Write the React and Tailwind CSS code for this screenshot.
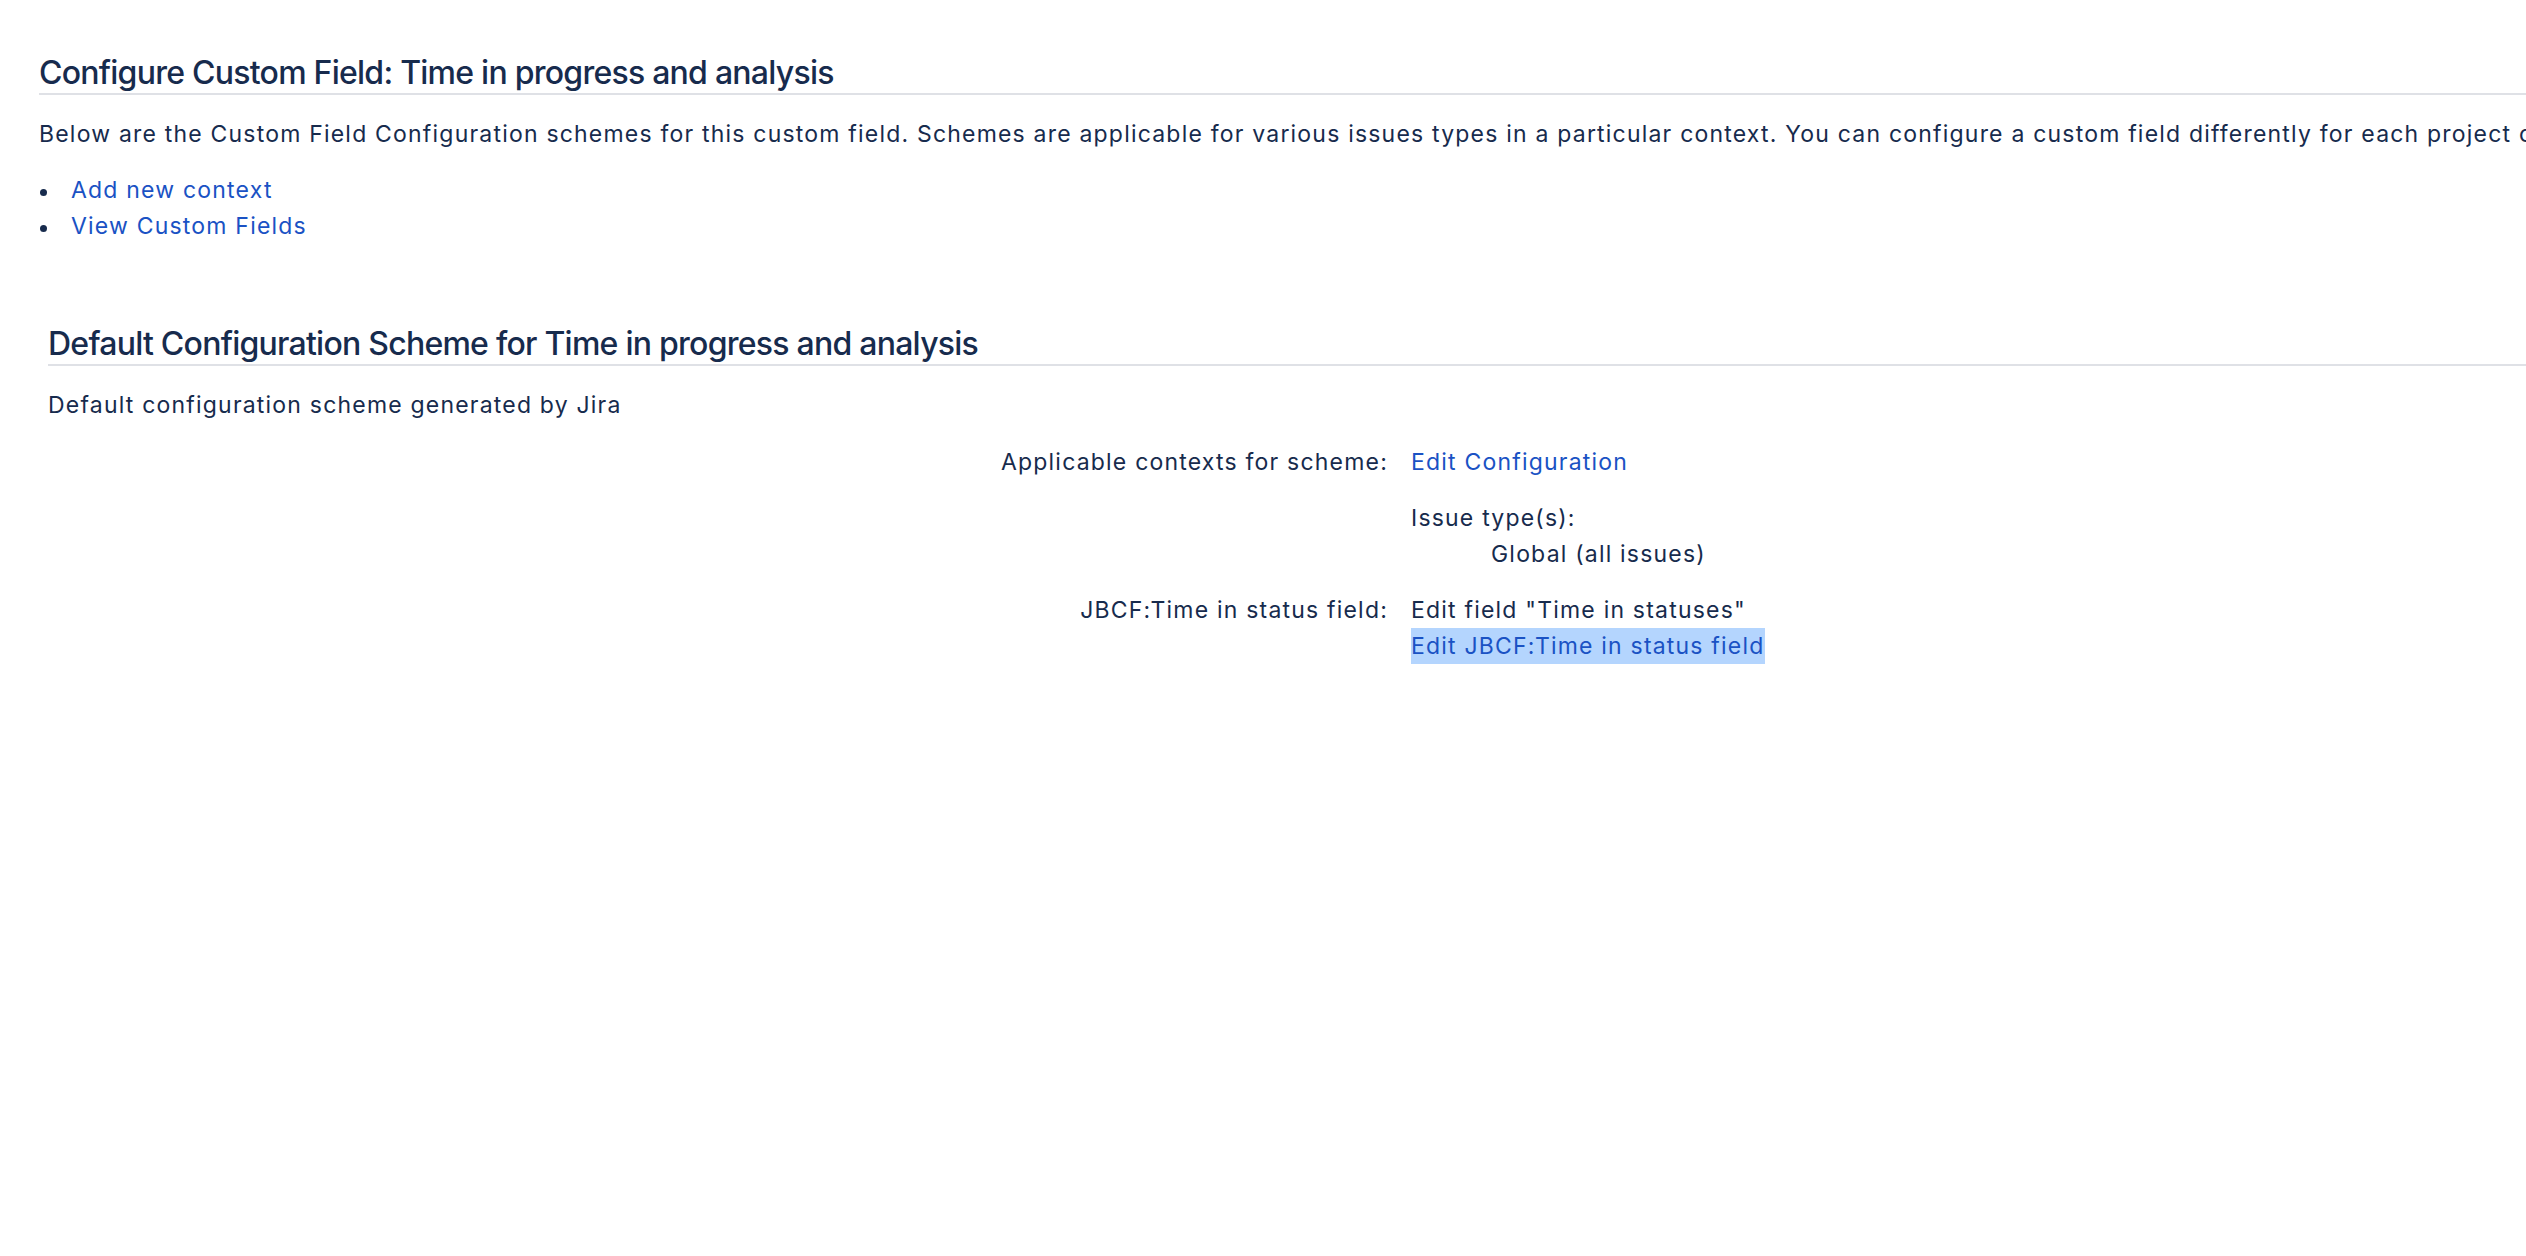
import React from "react";

function Bullet({ children }) {
  return (
    <li className="flex items-start">
      <span className="mt-[17px] ml-[1px] mr-[24px] h-[7px] w-[7px] shrink-0 rounded-full bg-[#172b4d]" />
      <a href="#" className="text-[#1a52c4]">{children}</a>
    </li>
  );
}

export default function App() {
  return (
    <div className="min-h-screen w-full overflow-hidden bg-white font-['Inter','Noto_Sans',sans-serif] text-[23px] leading-[36px] tracking-[1.2px] text-[#172b4d]">
      <div className="pl-[39px] pt-[53px]">
        <h1 className="border-b-2 border-[#dfe1e6] text-[32px] font-medium leading-[40px] tracking-[-0.75px] text-[#172b4d]">
          Configure Custom Field: Time in progress and analysis
        </h1>
        <p className="mt-[21px] whitespace-nowrap">
          Below are the Custom Field Configuration schemes for this custom field. Schemes are applicable for various issues types in a particular context. You can configure a custom field differently for each project or issue type.
        </p>
        <ul className="mt-[20px]">
          <Bullet>Add new context</Bullet>
          <Bullet>View Custom Fields</Bullet>
        </ul>

        <div className="mt-[80px] pl-[9px]">
          <h2 className="border-b-2 border-[#dfe1e6] text-[32px] font-medium leading-[40px] tracking-[-0.75px] text-[#172b4d]">
            Default Configuration Scheme for Time in progress and analysis
          </h2>
          <p className="mt-[21px]">Default configuration scheme generated by Jira</p>

          <div className="mt-[21px] grid grid-cols-[1340px_1fr] gap-x-[23px] gap-y-[20px]">
            <div className="text-right">Applicable contexts for scheme:</div>
            <div>
              <a href="#" className="text-[#1a52c4]">Edit Configuration</a>
            </div>

            <div />
            <div>
              <div>Issue type(s):</div>
              <div className="pl-[80px]">Global (all issues)</div>
            </div>

            <div className="text-right">JBCF:Time in status field:</div>
            <div>
              <div>Edit field "Time in statuses"</div>
              <div>
                <a href="#" className="inline-block bg-[#b4d5fe] text-[#1a52c4]">
                  Edit JBCF:Time in status field
                </a>
              </div>
            </div>
          </div>
        </div>
      </div>
    </div>
  );
}
